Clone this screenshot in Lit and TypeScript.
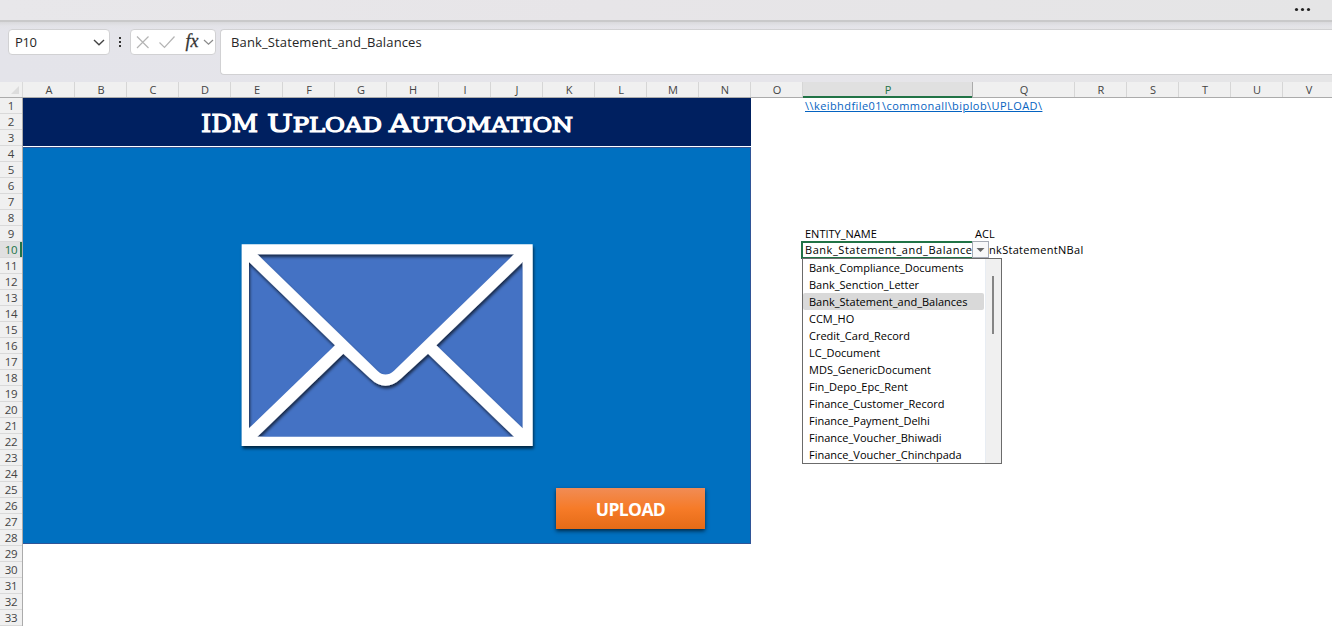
import { LitElement, html, svg, css } from "lit";
import { customElement, state } from "lit/decorators.js";
import { classMap } from "lit/directives/class-map.js";

const WIDE: Record<string, number> = { P: 170, Q: 102 };
const COLUMNS = "ABCDEFGHIJKLMNOPQRSTUV".split("").map((name) => ({ name, width: WIDE[name] ?? 52 }));
const ROWS = Array.from({ length: 33 }, (_, i) => i + 1);

@customElement("formula-bar")
class FormulaBar extends LitElement {
  static styles = css`
    :host { display: flex; align-items: flex-start; height: 60px; box-sizing: border-box; padding: 7px 0 0 8px;
      background: linear-gradient(180deg, #d9d9dc 0, #e3e3e8 4px, transparent 7px), linear-gradient(90deg, #e4e4ea, #e6e5ea 60%, #e5e5e6);
      font: 13px/24px "Open Sans", "Noto Sans", sans-serif; color: #262626; }
    .box { box-sizing: border-box; background: #fff; border: 1px solid #d1d1d3; border-radius: 4px; height: 26px; display: flex; align-items: center; }
    .name { width: 102px; padding: 0 4px 0 6px; justify-content: space-between; font-size: 13px; letter-spacing: -0.4px; }
    .dots { width: 20px; height: 26px; }
    .tools { width: 86px; }
    .value { flex: 1; height: 46px; margin-left: 4px; padding-left: 10px; border-right: 0; border-radius: 4px 0 0 4px; align-items: flex-start; letter-spacing: 0.13px; }
    svg { display: block; flex: none; }
    .fx { font: italic 19px "Liberation Serif", serif; fill: #333; stroke: #333; stroke-width: 0.3px; }
  `;
  render() {
    return html`
      <div class="box name"><span>P10</span>
        <svg width="12" height="8" viewBox="0 0 12 8"><path d="M1 2 6 6.700 11 2" fill="none" stroke="#444" stroke-width="1.4"/></svg>
      </div>
      <svg class="dots" viewBox="0 0 20 26"><path d="M9 8h2v2H9zM9 12h2v2H9zM9 16h2v2H9z" fill="#333"/></svg>
      <div class="box tools">
        <svg width="84" height="24" viewBox="0 0 84 24">
          <g fill="none" stroke="#b4b4b4" stroke-width="1.2">
            <path d="M6 6.500 17.500 18M17.500 6.500 6 18"/>
            <path d="M28.500 12.500 33.500 17.500 43.500 6.500"/>
            <path d="M73 10 77.500 14.200 82 10" stroke="#8a8a8a"/>
          </g>
          <text class="fx" x="54.500" y="17" textLength="13" lengthAdjust="spacingAndGlyphs">fx</text>
        </svg>
      </div>
      <div class="box value">Bank_Statement_and_Balances</div>`;
  }
}

@customElement("upload-panel")
class UploadPanel extends LitElement {
  static styles = css`
    :host { display: flex; flex-direction: column; box-sizing: border-box; width: 728px; height: 446px; background: #0070c0;
      border-right: 1px solid #2f5597; border-bottom: 1px solid #2f5597; }
    .banner { height: 48px; width: 728px; background: #002060; border-bottom: 1px solid #fff; box-shadow: 0 1px #2f5597; }
    .body { display: flex; flex-direction: column; }
    .envelope { margin: 88px 0 0 207px; }
    .title { font-family: "DejaVu Serif", serif; font-weight: normal; fill: #fff; stroke: #fff; stroke-width: 1.2px; }
    .upload { margin: 28px 0 0 533px; width: 149px; height: 41px; border: 0; padding: 0; color: #fff;
      background: linear-gradient(#f18c55, #f67b28 50%, #e56b17); box-shadow: 0 2px 4px rgba(0,0,0,.65);
      font: bold 17.5px/43px "Open Sans", "Noto Sans", sans-serif; letter-spacing: -0.6px; }
    svg { display: block; }
  `;
  private word(first: string, rest: string, x: number, width: number) {
    return svg`<text class="title" x=${x} y="33.500" font-size="24.500" textLength=${width} lengthAdjust="spacingAndGlyphs">${first}<tspan font-size="19.500">${rest}</tspan></text>`;
  }
  render() {
    return html`
      <div class="banner"><svg width="727" height="48">
        ${this.word("IDM", "", 178, 57)}
        ${this.word("U", "PLOAD", 244, 115)}
        ${this.word("A", "UTOMATION", 366, 184)}
      </svg></div>
      <div class="body">
        <svg class="envelope" width="320" height="225" viewBox="0 0 960 675">
          <defs><filter id="s" x="-5%" y="-5%" width="112%" height="115%"><feDropShadow dx="3" dy="8" stdDeviation="5" flood-color="#000" flood-opacity=".65"/></filter></defs>
          <path d="M38 31H905V630H38z" fill="#4472c4"/>
          <path filter="url(#s)" fill="#fff" fill-rule="evenodd" d="M35 28H908V633H35z
            M82 58H852L492 407Q466 430 442 407z
            M57 81 315 331 57 580z
            M878 81V580L619 331z
            M340 356 420 430Q466 475 514 430L594 356 852 605H82z"/>
        </svg>
        <button class="upload">UPLOAD</button>
      </div>`;
  }
}

@customElement("entity-list")
class EntityList extends LitElement {
  static styles = css`
    :host { display: flex; box-sizing: border-box; width: 200px; height: 206px; border: 1px solid #6b6b6b; background: #fff;
      font: 11px/17px "Open Sans", "Noto Sans", sans-serif; color: #000; }
    .items { width: 181px; }
    .item { height: 17px; padding-left: 6px; white-space: nowrap; border-radius: 2px; }
    .chosen { background: #d9d9d9; }
    .track { flex: 1; margin-left: 1px; background: #f0f0f0; border-left: 1px solid #e8edf3; }
    .thumb { width: 2px; height: 58px; margin: 17px 0 0 6px; background: #858585; }
  `;
  @state() private selected = "Bank_Statement_and_Balances";
  private items = ["Bank_Compliance_Documents", "Bank_Senction_Letter", "Bank_Statement_and_Balances", "CCM_HO",
    "Credit_Card_Record", "LC_Document", "MDS_GenericDocument", "Fin_Depo_Epc_Rent", "Finance_Customer_Record",
    "Finance_Payment_Delhi", "Finance_Voucher_Bhiwadi", "Finance_Voucher_Chinchpada"];
  render() {
    return html`<div class="items">${this.items.map((name) => html`
      <div class=${classMap({ item: true, chosen: name === this.selected })} @click=${() => (this.selected = name)}>${name}</div>`)}</div>
      <div class="track"><div class="thumb"></div></div>`;
  }
}

@customElement("app-root")
class AppRoot extends LitElement {
  static styles = css`
    :host { display: flex; flex-direction: column; width: 1332px; height: 626px; overflow: hidden; background: #fff;
      font: 11px/16px "Open Sans", "Noto Sans", sans-serif; color: #000; }
    .ribbon { height: 22px; flex: none; box-sizing: border-box; border-bottom: 2px solid #c9c9ca; display: flex; justify-content: flex-end;
      background: linear-gradient(90deg, #e8e7ea, #e7e5e8 45%, #e5e5e6); }
    .more { margin-right: 20px; }
    .columns { display: flex; height: 16px; flex: none; background: #f0f0f0; box-sizing: border-box; border-bottom: 1px solid #ababab; }
    .corner { width: 23px; flex: none; box-sizing: border-box; border-right: 1px solid #dadada; }
    .col { flex: none; box-sizing: border-box; border-right: 1px solid #d6d6d6; text-align: center; color: #444; line-height: 15px; font-size: 11px; height: 15px; padding-left: 1px; }
    .col.active { height: 16px; background: #e0e0e0; color: #217346; box-shadow: inset 0 -2px #217346; border-color: #ababab; }
    .sheet { display: flex; flex: 1; }
    .rows { width: 23px; flex: none; box-sizing: border-box; border-right: 1px solid #ababab; background: #f0f0f0; }
    .row { height: 16px; box-sizing: border-box; border-bottom: 1px solid #d9d9d9; text-align: center; color: #444; line-height: 15px; font-size: 11.5px; letter-spacing: -0.3px; }
    .row.active { background: #e0e0e0; color: #217346; box-shadow: inset -2px 0 #217346; }
    .cells { display: grid; grid-template-columns: 170px 102px; grid-auto-rows: 16px; margin-left: 51px; position: relative; white-space: nowrap; align-content: start; }
    .cell { padding-left: 3px; }
    .r1 { grid-row: 1; } .r9 { grid-row: 9; } .r10 { grid-row: 10; }
    .p { grid-column: 1; } .q { grid-column: 2; }
    .link { color: #0563c1; text-decoration: underline; letter-spacing: 0.43px; }
    .current { box-sizing: border-box; margin: -1px -1px -1px -1px; border: 2px solid #217346; border-right-width: 1px; padding-left: 2px; overflow: hidden; line-height: 14px; letter-spacing: 0.55px; }
    .behind { padding-left: 17px; letter-spacing: 0.3px; }
    .toggle { position: absolute; left: 170px; top: 143px; width: 17px; height: 17px; box-sizing: border-box; border: 1px solid #a6abb5; background: #f8f8f9; }
    .menu { position: absolute; left: 0; top: 160px; }
    svg { display: block; }
  `;
  render() {
    return html`
      <div class="ribbon"><svg class="more" width="18" height="20" viewBox="0 0 18 20" fill="#222">
        <circle cx="2.500" cy="9.500" r="1.600"/><circle cx="8.500" cy="9.500" r="1.600"/><circle cx="14.500" cy="9.500" r="1.600"/></svg></div>
      <formula-bar></formula-bar>
      <div class="columns">
        <div class="corner"><svg width="22" height="15"><path d="M19 4V12H11z" fill="#dcdcdc"/></svg></div>
        ${COLUMNS.map((c) => html`<div class=${classMap({ col: true, active: c.name === "P" })} style="width:${c.width}px">${c.name}</div>`)}
      </div>
      <div class="sheet">
        <div class="rows">${ROWS.map((r) => html`<div class=${classMap({ row: true, active: r === 10 })}>${r}</div>`)}</div>
        <upload-panel></upload-panel>
        <div class="cells">
          <div class="cell r1 p link">\\\\keibhdfile01\\commonall\\biplob\\UPLOAD\\</div>
          <div class="cell r9 p">ENTITY_NAME</div>
          <div class="cell r9 q">ACL</div>
          <div class="cell r10 p current">Bank_Statement_and_Balances</div>
          <div class="cell r10 q behind">nkStatementNBal</div>
          <div class="toggle"><svg width="15" height="15"><path d="M3.500 6H11.500L7.500 10z" fill="#666"/></svg></div>
          <entity-list class="menu"></entity-list>
        </div>
      </div>`;
  }
}
